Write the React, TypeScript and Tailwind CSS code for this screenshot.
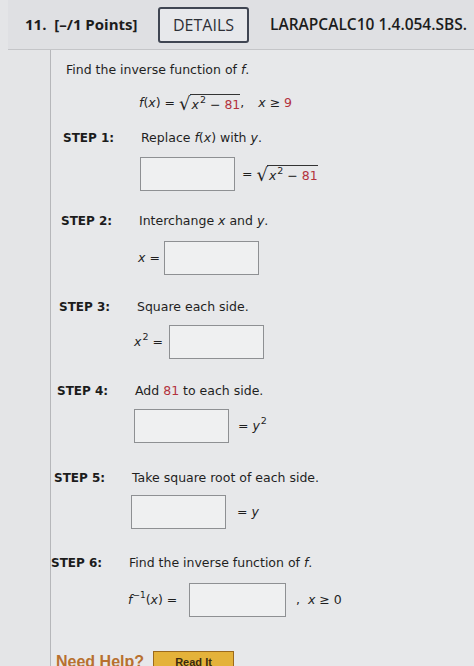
import React from "react";

const red = "text-[#b3333d]";

function Box({ w = "w-[95px]" }: { w?: string }) {
  return <div className={`h-[34px] ${w} border border-[#8e9093] bg-[#eff0f1]`} />;
}

function Sqrt({ children }: { children: React.ReactNode }) {
  return (
    <span className="inline-flex items-end">
      <span className="text-[18px] leading-none -mr-[1px]">√</span>
      <span className="border-t border-[#333] pt-[1px] pl-[2px] leading-[17px]">{children}</span>
    </span>
  );
}

function X2({ v = "x" }: { v?: string }) {
  return (
    <span>
      <i>{v}</i>
      <sup className="text-[9.5px] -top-[6px] ml-[1px]">2</sup>
    </span>
  );
}

function Step({
  label,
  text,
  row,
  offset,
  gap,
}: {
  label: string;
  text: React.ReactNode;
  row: React.ReactNode;
  offset: string;
  gap: string;
}) {
  return (
    <div className={`flex ${offset} ${gap}`}>
      <div className="w-[78px] shrink-0 font-bold text-[12px] leading-[20px] text-[#1c1c1c]">{label}</div>
      <div className="flex flex-col">
        <div className="leading-[20px]">{text}</div>
        {row}
      </div>
    </div>
  );
}

export default function App() {
  return (
    <div
      className="w-[474px] h-[666px] overflow-hidden bg-[#e4e5e7] text-[12.5px] text-[#1f1f1f]"
      style={{ fontFamily: '"DejaVu Sans", Verdana, sans-serif' }}
    >
      <div
        className="ml-[8px] h-[50px] bg-[#dfe0e3] border-b border-[#c4c5c8] flex items-center pl-[17px] text-[#1c1c1c]"
        style={{ fontFamily: '"Open Sans", sans-serif' }}
      >
        <span className="font-bold text-[15px] w-[133px]">11.&nbsp; [–/1 Points]</span>
        <span className="h-[36px] w-[91px] border-2 border-[#3f4552] rounded-[3px] bg-[#e7e8eb] flex items-center justify-center text-[16px] text-[#2d2f36]">
          DETAILS
        </span>
        <span className="ml-[21px] font-semibold text-[15.5px]">LARAPCALC10 1.4.054.SBS.</span>
      </div>

      <div className="ml-[50px] border-l border-[#b6b7ba] bg-[#e7e8ea] h-[616px] flex flex-col">
        <div className="ml-[15px] mt-[11px] leading-[18px]">
          Find the inverse function of <i>f</i>.
        </div>
        <div className="ml-[88px] mt-[15px] flex items-end h-[22px]">
          <span>
            <i>f</i>(<i>x</i>) =&nbsp;
          </span>
          <Sqrt>
            <X2 /> − <span className={red}>81</span>
          </Sqrt>
          <span>,</span>
          <span className="ml-[14px]">
            <i>x</i> ≥ <span className={red}>9</span>
          </span>
        </div>

        <Step
          label="STEP 1:"
          offset="ml-[12px]"
          gap="mt-[15px]"
          text={
            <>
              Replace <i>f</i>(<i>x</i>) with <i>y</i>.
            </>
          }
          row={
            <div className="mt-[9px] flex items-center -ml-[1px]">
              <Box />
              <span className="ml-[7px] flex items-end">
                =&nbsp;
                <Sqrt>
                  <X2 /> − <span className={red}>81</span>
                </Sqrt>
              </span>
            </div>
          }
        />

        <Step
          label="STEP 2:"
          offset="ml-[10px]"
          gap="mt-[20px]"
          text={
            <>
              Interchange <i>x</i> and <i>y</i>.
            </>
          }
          row={
            <div className="mt-[10px] flex items-center -ml-[1px]">
              <span className="w-[26px]">
                <i>x</i> =
              </span>
              <Box />
            </div>
          }
        />

        <Step
          label="STEP 3:"
          offset="ml-[8px]"
          gap="mt-[22px]"
          text="Square each side."
          row={
            <div className="mt-[8px] flex items-center -ml-[3px]">
              <span className="w-[35px]">
                <X2 /> =
              </span>
              <Box />
            </div>
          }
        />

        <Step
          label="STEP 4:"
          offset="ml-[6px]"
          gap="mt-[22px]"
          text={
            <>
              Add <span className={red}>81</span> to each side.
            </>
          }
          row={
            <div className="mt-[8px] flex items-center -ml-[1px]">
              <Box />
              <span className="ml-[9px]">
                = <X2 v="y" />
              </span>
            </div>
          }
        />

        <Step
          label="STEP 5:"
          offset="ml-[3px]"
          gap="mt-[25px]"
          text="Take square root of each side."
          row={
            <div className="mt-[7px] flex items-center -ml-[1px]">
              <Box />
              <span className="ml-[11px]">
                = <i>y</i>
              </span>
            </div>
          }
        />

        <Step
          label="STEP 6:"
          offset="ml-0"
          gap="mt-[24px]"
          text={
            <>
              Find the inverse function of <i>f</i>.
            </>
          }
          row={
            <div className="mt-[10px] flex items-center -ml-[1px]">
              <span className="w-[61px]">
                <i>f</i>
                <sup className="text-[9px] -top-[6px]">−1</sup>(<i>x</i>) =
              </span>
              <Box w="w-[97px]" />
              <span className="ml-[10px]">
                , <span className="ml-[4px]"><i>x</i> ≥ 0</span>
              </span>
            </div>
          }
        />

        <div className="mt-[33px] ml-[5px] flex items-center">
          <span
            className="text-[16px] font-bold text-[#b8702f]"
            style={{ fontFamily: '"Liberation Sans", Arial, sans-serif' }}
          >
            Need Help?
          </span>
          <span
            className="ml-[9px] h-[22px] w-[81px] border border-[#9c6a1c] bg-[#e4b23a] flex items-center justify-center text-[11px] font-bold text-[#3b2a10]"
            style={{ fontFamily: '"Liberation Sans", Arial, sans-serif' }}
          >
            Read It
          </span>
        </div>
      </div>
    </div>
  );
}
